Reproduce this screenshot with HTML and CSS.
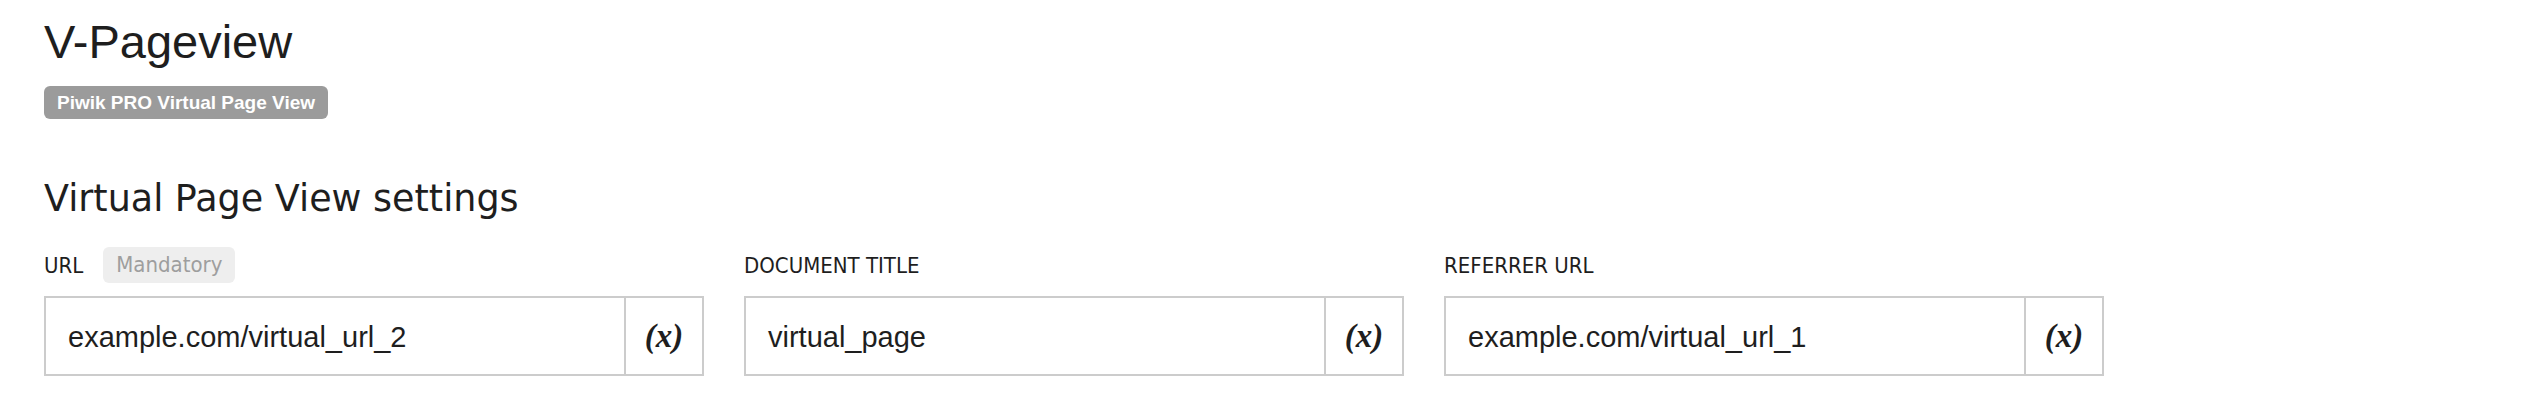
FILE: index.html
```html
<!DOCTYPE html>
<html lang="en">
<head>
    <meta charset="UTF-8">
    <meta name="viewport" content="width=device-width, initial-scale=1.0">
    <title>V-Pageview</title>
    <link rel="stylesheet" href="styles.css">
</head>
<body>
    <div class="page">
        <h1 class="title">V-Pageview</h1>
        <span class="tag">Piwik PRO Virtual Page View</span>

        <h2 class="section-title">Virtual Page View settings</h2>
        <div class="fields">
            <!-- URL -->
            <div class="field">
                <div class="label-row">
                    <span class="label">URL</span>
                    <span class="mandatory">Mandatory</span>
                </div>
                <div class="input-box">
                    <div class="value">example.com/virtual_url_2</div>
                    <div class="var-button">(<i>x</i>)</div>
                </div>
            </div>
            <!-- Document title -->
            <div class="field">
                <div class="label-row">
                    <span class="label">Document title</span>
                </div>
                <div class="input-box">
                    <div class="value">virtual_page</div>
                    <div class="var-button">(<i>x</i>)</div>
                </div>
            </div>
            <!-- Referrer -->
            <div class="field">
                <div class="label-row">
                    <span class="label">Referrer URL</span>
                </div>
                <div class="input-box">
                    <div class="value">example.com/virtual_url_1</div>
                    <div class="var-button">(<i>x</i>)</div>
                </div>
            </div>
        </div>
    </div>
</body>
</html>
```

FILE: styles.css
```css
/* Layout for the tag settings page */
body {
    margin: 0;
    background: #fff;
    color: #1e1e1e;
    font-family: "DejaVu Sans", Verdana, sans-serif;
}

.page {
    padding: 14px 44px 0;
}

.title {
    font-family: "Liberation Sans", Arial, sans-serif;
    font-size: 47px;
    font-weight: 400;
    line-height: 56px;
    margin: 0 0 16px;
}

.tag {
    display: inline-block;
    background: #9b9b9b;
    color: #fff;
    font-family: "Liberation Sans", Arial, sans-serif;
    font-weight: 700;
    font-size: 19px;
    line-height: 33px;
    padding: 0 13px;
    border-radius: 6px;
}

.section-title {
    font-size: 36.5px;
    font-weight: 400;
    line-height: 40px;
    margin: 60px 0 28px;
}

.fields {
    display: flex;
    gap: 40px;
}

.field {
    width: 660px;
}

.label-row {
    display: flex;
    align-items: center;
    gap: 20px;
    height: 36px;
    margin-bottom: 13px;
}

.label {
    font-family: "DejaVu Sans Condensed", "DejaVu Sans", sans-serif;
    font-size: 22px;
    text-transform: uppercase;
}

.mandatory {
    background: #eeeeee;
    color: #9e9e9e;
    font-family: "DejaVu Sans Condensed", "DejaVu Sans", sans-serif;
    font-size: 22px;
    line-height: 36px;
    padding: 0 13px;
    border-radius: 6px;
}

.input-box {
    display: flex;
    height: 80px;
    border: 2px solid #cccccc;
    box-sizing: border-box;
}

.value {
    flex: 1;
    display: flex;
    align-items: center;
    padding: 3px 0 0 22px;
    font-family: "Liberation Sans", Arial, sans-serif;
    font-size: 29px;
}

.var-button {
    width: 76px;
    display: flex;
    align-items: center;
    justify-content: center;
    border-left: 2px solid #cccccc;
    font-family: "Liberation Serif", "Times New Roman", serif;
    font-size: 33px;
    font-style: italic;
    font-weight: 700;
}
```
